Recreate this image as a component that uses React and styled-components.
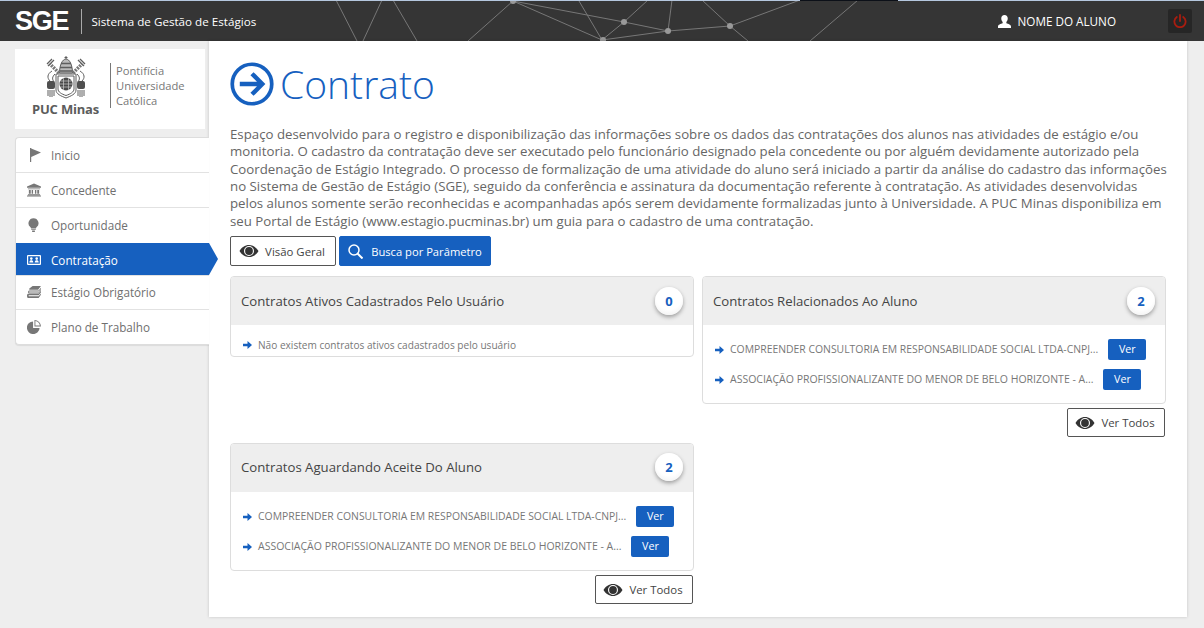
import React from 'react'
import styled, { createGlobalStyle } from 'styled-components'

const Global = createGlobalStyle`
  html, body { margin: 0; padding: 0; }
  body {
    background: #eeeeee;
    font-family: 'Open Sans', 'Noto Sans', sans-serif;
    color: #666;
    height: 628px;
    overflow: hidden;
  }
`

const blue = '#1660bf'

const Page = styled.div`
  width: 1204px;
  height: 628px;
  display: flex;
  flex-direction: column;
`

const Header = styled.header`
  position: relative;
  height: 41px;
  flex: none;
  box-sizing: border-box;
  background: #353535;
  border-top: 1px solid #b5c7de;
  border-image: linear-gradient(to right, #b5c7de 800px, #0c1018 800px, #0c1018 898px, #b5c7de 898px) 1;
  display: flex;
  align-items: center;
  overflow: hidden;
  color: #fff;
`

const Mesh = styled.svg`
  position: absolute;
  left: 0;
  top: -1px;
  width: 1204px;
  height: 41px;
`

const Brand = styled.div`
  font-family: 'Liberation Sans', sans-serif;
  font-weight: 700;
  font-size: 27px;
  letter-spacing: -1.2px;
  margin-left: 15px;
  padding-right: 13px;
  border-right: 1px solid #aaa;
  height: 25px;
  line-height: 25px;
  position: relative;
`

const HeaderTitle = styled.div`
  font-size: 11.65px;
  margin-left: 9px;
  position: relative;
`

const UserBox = styled.div`
  margin-left: auto;
  display: flex;
  align-items: center;
  position: relative;
  font-size: 11.7px;
  gap: 7px;
`

const PowerBox = styled.div`
  width: 24px;
  height: 24px;
  margin: 0 12px 0 52px;
  border-radius: 2px;
  background: #262626;
  display: flex;
  align-items: center;
  justify-content: center;
  position: relative;
`

const Body = styled.div`
  flex: 1;
  display: flex;
  align-items: flex-start;
`

const Sidebar = styled.aside`
  width: 194px;
  margin-left: 15px;
  padding-top: 8px;
  flex: none;
  position: relative;
  z-index: 1;
`

const LogoBox = styled.div`
  width: 190px;
  height: 80px;
  background: #fff;
  display: flex;
  align-items: flex-start;
  box-sizing: border-box;
  padding: 7px 0 0 17px;
`

const LogoMark = styled.div`
  width: 67px;
  display: flex;
  flex-direction: column;
  align-items: center;
  color: #5c5c5c;
`

const LogoName = styled.div`
  font-size: 13px;
  font-weight: 700;
  letter-spacing: -0.2px;
  line-height: 14px;
  white-space: nowrap;
  margin-top: 2px;
`

const LogoText = styled.div`
  margin: 7px 0 0 11px;
  padding-left: 5px;
  border-left: 1px solid #777;
  font-size: 11.2px;
  line-height: 15px;
  color: #777;
  height: 45px;
`

const Menu = styled.nav`
  margin-top: 8px;
  background: #fff;
  border: 1px solid #ddd;
  border-right: 0;
  border-radius: 4px 0 0 4px;
  box-shadow: 0 1px 1px rgba(0, 0, 0, 0.08);
`

const MenuItem = styled.div`
  position: relative;
  height: ${p => p.$h}px;
  display: flex;
  align-items: center;
  font-size: 11.7px;
  color: ${p => (p.$active ? '#fff' : '#6f6f6f')};
  background: ${p => (p.$active ? blue : 'transparent')};
  border-top: ${p => (p.$first || p.$active ? '0' : '1px solid #e2e2e2')};
  box-sizing: border-box;
  padding-top: ${p => p.$pt || 0}px;
  padding-bottom: ${p => p.$pb || 0}px;

  ${p => p.$active && `
    &::after {
      content: '';
      position: absolute;
      left: 100%;
      top: 0;
      border-left: 9px solid ${blue};
      border-top: 16px solid transparent;
      border-bottom: 16px solid transparent;
    }
  `}
`

const MenuIcon = styled.span`
  width: 35px;
  display: flex;
  justify-content: center;
  flex: none;
  color: ${p => (p.$active ? '#fff' : '#777')};
`

const Main = styled.main`
  width: 978px;
  height: 576px;
  background: #fff;
  box-sizing: border-box;
  padding: 0 21px;
  box-shadow: 0 0 3px rgba(0, 0, 0, 0.18);
  position: relative;
`

const TitleRow = styled.div`
  display: flex;
  align-items: center;
  height: 85px;
  gap: 6px;
`

const Title = styled.h1`
  margin: 0;
  font-size: 39px;
  font-weight: 300;
  color: ${blue};
  line-height: 46px;
`

const Intro = styled.p`
  margin: 0 -2px 0 0;
  font-size: 13.25px;
  line-height: 17.33px;
  color: #666;
  height: 110px;
`

const Toolbar = styled.div`
  display: flex;
  gap: 3px;
`

const Button = styled.div`
  display: inline-flex;
  align-items: center;
  justify-content: center;
  box-sizing: border-box;
  height: ${p => p.$h || 30}px;
  width: ${p => p.$w}px;
  gap: ${p => p.$gap || 6}px;
  border-radius: 2px;
  font-size: ${p => p.$size || 11.4}px;
  border: 1px solid ${p => (p.$primary ? blue : '#555')};
  background: ${p => (p.$primary ? blue : '#fff')};
  color: ${p => (p.$primary ? '#fff' : '#444')};
`

const Grid = styled.div`
  display: grid;
  grid-template-columns: 464px 464px;
  column-gap: 8px;
  row-gap: 6px;
  margin-top: 10px;
  align-items: start;
`

const Column = styled.div`
  display: flex;
  flex-direction: column;
`

const Panel = styled.section`
  border: 1px solid #ddd;
  border-radius: 4px;
  background: #fff;
  overflow: hidden;
  box-sizing: border-box;
`

const PanelHead = styled.div`
  height: 48px;
  box-sizing: border-box;
  padding: 0 10px ${p => (p.$lift ? 2 : 0)}px;
  background: #eeeeee;
  display: flex;
  align-items: center;
  justify-content: space-between;
  font-size: 13.2px;
  color: #444;
`

const Badge = styled.span`
  width: 28px;
  height: 28px;
  border-radius: 50%;
  background: radial-gradient(circle at 50% 35%, #fff 55%, #ececec 100%);
  color: ${blue};
  font-size: 13px;
  font-weight: 700;
  display: flex;
  align-items: center;
  justify-content: center;
  box-shadow: 0 2px 4px rgba(0, 0, 0, 0.35);
`

const PanelBody = styled.div`
  padding: ${p => (p.$empty ? '11px 12px 3px' : '14px 12px 13px')};
`

const Row = styled.div`
  display: flex;
  align-items: center;
  height: ${p => (p.$empty ? '17px' : '21px')};
  font-size: ${p => p.$size || 10.4}px;
  color: #777;
  white-space: nowrap;

  & + & { margin-top: 9px; }
`

const RowText = styled.span`
  margin-top: ${p => (p.$empty ? 0 : -2)}px;
`

const RowArrow = styled.svg`
  width: 9px;
  height: 8px;
  margin-right: 6px;
  flex: none;
`

const SeeButton = styled.span`
  margin-left: 10px;
  width: 38px;
  height: 21px;
  box-sizing: border-box;
  padding-bottom: 2px;
  border-radius: 2px;
  background: ${blue};
  color: #fff;
  font-size: 10.7px;
  display: flex;
  align-items: center;
  justify-content: center;
`

const FooterActions = styled.div`
  display: flex;
  justify-content: flex-end;
  margin: 4px 1px 0 0;
`

const EyeIcon = styled.svg`
  margin-left: -2px;
`

function Eye() {
  return (
    <EyeIcon width="20" height="12" viewBox="0 0 19 12" fill="#333">
      <path fillRule="evenodd" d="M9.500 0C5.500 0 2 2.500 0 6c2 3.500 5.500 6 9.500 6s7.500-2.500 9.500-6c-2-3.500-5.500-6-9.500-6Zm0 1a5 5 0 1 1 0 10 5 5 0 0 1 0-10Z" />
      <circle cx="9.500" cy="6" r="3.900" />
    </EyeIcon>
  )
}

function Arrow() {
  return (
    <RowArrow viewBox="0 0 9 8" fill={blue}>
      <path d="M0 2.700h4.500V0L9 4 4.500 8V5.300H0Z" />
    </RowArrow>
  )
}

function Crest() {
  return (
    <svg width="42" height="44" viewBox="0 0 42 44" fill="none" stroke="#5e5e5e" strokeWidth="1">
      <path d="M21 0v3M19.500 1.500h3" />
      <path d="M14.500 17c0-8 3-14 6.500-14s6.500 6 6.500 14Z" fill="#bbb" />
      <path d="M16 7.500h10M15 11.500h12M14.500 15h13" strokeWidth="1.300" />
      <path d="M14 17 5 8M28 17l9-9" stroke="#777" strokeWidth="3.500" strokeDasharray="2 1" />
      <path d="M9 4 3 10M33 4l6 6M7 3 2 8M35 3l5 5" strokeWidth="1.300" />
      <path d="M11 18h20v16c0 4-5 6-10 8-5-2-10-4-10-8Z" fill="#fff" />
      <path d="M13 20h16v13c0 3-3.500 5-8 6.500-4.500-1.500-8-3.500-8-6.500Z" />
      <circle cx="21" cy="28" r="6.500" fill="#4a4a4a" stroke="none" />
      <path d="M15.500 25h11M15 28h12M15.500 31h11M18.500 22v12M23.500 22v12" stroke="#ccc" strokeWidth=".7" />
      <path d="M7 15c-5 3-5 7-2 10M35 15c5 3 5 7 2 10M10 18c-3 3-3 5-1 8M32 18c3 3 3 5 1 8" />
      <rect x="2" y="25" width="8" height="8" rx="2" fill="#4f4f4f" stroke="none" />
      <rect x="32" y="25" width="8" height="8" rx="2" fill="#4f4f4f" stroke="none" />
      <path d="M3 34v6M5 34v7M7 34v7M9 34v6M33 34v6M35 34v7M37 34v7M39 34v6" strokeWidth="1" />
    </svg>
  )
}

const FlagIcon = styled.svg`
  margin-left: 3px;
`

function Flag() {
  return (
    <FlagIcon width="11" height="14" viewBox="0 0 11 14" fill="currentColor">
      <path d="M0 0h1.200v14H0ZM1.200.5 11 4.500 1.200 9Z" />
    </FlagIcon>
  )
}

function Bank() {
  return (
    <svg width="14" height="14" viewBox="0 0 15 14" fill="currentColor">
      <path d="M7.500 0 15 3.200V4.500H0V3.200ZM1 5.500h13v.8H1ZM2 7h2v4H2ZM5 7h1.500v4H5ZM8.500 7H10v4H8.500ZM11 7h2v4h-2ZM1 11.500h13v1H1ZM0 13h15v1H0Z" />
    </svg>
  )
}

function Bulb() {
  return (
    <svg width="11" height="14" viewBox="0 0 12 15" fill="currentColor">
      <path d="M6 0a5.500 5.500 0 0 1 3.500 9.700c-.6.600-.8 1-.8 1.500H3.300c0-.5-.2-.9-.8-1.500A5.500 5.500 0 0 1 6 0ZM3.500 12h5v1h-5ZM4.500 13.500h3V15h-3Z" />
    </svg>
  )
}

function Card() {
  return (
    <svg width="14" height="10" viewBox="0 0 14 10" fill="currentColor">
      <path fillRule="evenodd" d="M1 0h12a1 1 0 0 1 1 1v8a1 1 0 0 1-1 1H1a1 1 0 0 1-1-1V1a1 1 0 0 1 1-1Zm.2 1.200v7.600h11.600V1.200Z" />
      <circle cx="4.300" cy="3.600" r="1.300" />
      <circle cx="9.700" cy="3.600" r="1.300" />
      <path d="M2.300 7.500c0-1.700 1-2.300 2-2.300s2 .6 2 2.300ZM7.700 7.500c0-1.700 1-2.300 2-2.300s2 .6 2 2.300Z" />
    </svg>
  )
}

function Books() {
  return (
    <svg width="14" height="12" viewBox="0 0 15 13" fill="currentColor">
      <path d="M6 0h9l-3 4H3c-1 0-1-.8-.5-1.300Z" />
      <path d="M2 5h10.500L15 2v1.500L12.500 6H2.500C2 6 2 7 2.500 7h10L15 4v1.500L12.500 8H2C1 8 .5 6 2 5Z" />
      <path d="M1 8.500h11.500L15 5.500V7l-2.500 3H2c-.5 0-.5 1 0 1h10.500L15 8v1.500L12.500 13H1.500C-.5 13-.5 9 1 8.500Z" />
    </svg>
  )
}

function Pie() {
  return (
    <svg width="14" height="14" viewBox="0 0 15 15" fill="currentColor">
      <path d="M6.500 1.500v7h7a6.800 6.800 0 1 1-7-7Z" />
      <path fillRule="evenodd" d="M8 0a7 7 0 0 1 7 7H8Zm1 1.200V6h4.800A6 6 0 0 0 9 1.200Z" />
    </svg>
  )
}

const navItems = [
  { label: 'Inicio', icon: <Flag />, h: 34, first: true },
  { label: 'Concedente', icon: <Bank />, h: 35 },
  { label: 'Oportunidade', icon: <Bulb />, h: 36, pb: 2 },
  { label: 'Contratação', icon: <Card />, h: 32, active: true, pt: 2 },
  { label: 'Estágio Obrigatório', icon: <Books />, h: 34, pb: 2 },
  { label: 'Plano de Trabalho', icon: <Pie />, h: 35 },
]

const related = [
  { text: 'COMPREENDER CONSULTORIA EM RESPONSABILIDADE SOCIAL LTDA-CNPJ...', size: 10.4 },
  { text: 'ASSOCIAÇÃO PROFISSIONALIZANTE DO MENOR DE BELO HORIZONTE - A...', size: 10.5 },
]

function ContractPanel({ title, lift }) {
  return (
    <>
      <Panel>
        <PanelHead $lift={lift}>
          {title}
          <Badge>2</Badge>
        </PanelHead>
        <PanelBody>
          {related.map(r => (
            <Row key={r.text} $size={r.size}>
              <Arrow />
              <RowText>{r.text}</RowText>
              <SeeButton>Ver</SeeButton>
            </Row>
          ))}
        </PanelBody>
      </Panel>
      <FooterActions>
        <Button $w={98} $h={29}><Eye /> Ver Todos</Button>
      </FooterActions>
    </>
  )
}

export default function App() {
  return (
    <Page>
      <Global />
      <Header>
        <Mesh viewBox="0 0 1204 41" fill="none" stroke="#777" strokeWidth="1">
          <path d="M336 0l21 41M382 0l-19 41M393 0l24 41M468 41 513 1 602 40M513 1 624 22 668 31M579 1l23 39M602 40l22-18L648 0M602 40l66-9 62-5L800 0M672 0l-4 31M702 0l28 26 18 15M858 0l-48 41" />
          <g fill="#999" stroke="none">
            <circle cx="513" cy="1" r="3" />
            <circle cx="624" cy="22" r="3" />
            <circle cx="668" cy="31" r="3" />
            <circle cx="730" cy="26" r="3" />
            <circle cx="603" cy="40" r="3" />
          </g>
        </Mesh>
        <Brand>SGE</Brand>
        <HeaderTitle>Sistema de Gestão de Estágios</HeaderTitle>
        <UserBox>
          <svg width="13" height="13" viewBox="0 0 14 14" fill="#fff">
            <path d="M7 0c2.200 0 3.500 1.500 3.500 3.800 0 1.500-.7 3-1.500 3.800v1.200c2 .7 5 1.500 5 3.500V14H0v-1.700c0-2 3-2.800 5-3.500V7.600C4.200 6.800 3.500 5.300 3.500 3.800 3.500 1.500 4.800 0 7 0Z" />
          </svg>
          NOME DO ALUNO
        </UserBox>
        <PowerBox>
          <svg width="14" height="14" viewBox="0 0 14 14" fill="none" stroke="#a81d10" strokeWidth="1.800" strokeLinecap="round">
            <path d="M7 1v6M3.800 3A5.600 5.600 0 1 0 10.200 3" />
          </svg>
        </PowerBox>
      </Header>
      <Body>
        <Sidebar>
          <LogoBox>
            <LogoMark>
              <Crest />
              <LogoName>PUC Minas</LogoName>
            </LogoMark>
            <LogoText>Pontifícia<br />Universidade<br />Católica</LogoText>
          </LogoBox>
          <Menu>
            {navItems.map(item => (
              <MenuItem key={item.label} $h={item.h} $first={item.first} $active={item.active} $pt={item.pt} $pb={item.pb}>
                <MenuIcon $active={item.active}>{item.icon}</MenuIcon>
                {item.label}
              </MenuItem>
            ))}
          </Menu>
        </Sidebar>
        <Main>
          <TitleRow>
            <svg width="44" height="44" viewBox="0 0 45 45" fill="none" stroke={blue}>
              <circle cx="22.500" cy="22.500" r="20.200" strokeWidth="3.800" />
              <path d="M10 22.500h22M22.500 12l10.500 10.500L22.500 33" strokeWidth="4.500" />
            </svg>
            <Title>Contrato</Title>
          </TitleRow>
          <Intro>
            Espaço desenvolvido para o registro e disponibilização das informações sobre os dados das contratações dos alunos nas atividades de estágio e/ou monitoria. O cadastro da contratação deve ser executado pelo funcionário designado pela concedente ou por alguém devidamente autorizado pela Coordenação de Estágio Integrado. O processo de formalização de uma atividade do aluno será iniciado a partir da análise do cadastro das informações no Sistema de Gestão de Estágio (SGE), seguido da conferência e assinatura da documentação referente à contratação. As atividades desenvolvidas pelos alunos somente serão reconhecidas e acompanhadas após serem devidamente formalizadas junto à Universidade. A PUC Minas disponibiliza em seu Portal de Estágio (www.estagio.pucminas.br) um guia para o cadastro de uma contratação.
          </Intro>
          <Toolbar>
            <Button $w={106}><Eye /> Visão Geral</Button>
            <Button $w={152} $primary $size={11.2} $gap={8}>
              <svg width="15" height="15" viewBox="0 0 15 15" fill="none" stroke="#fff" strokeWidth="1.500">
                <circle cx="6" cy="6" r="5" />
                <path d="m9.500 9.500 5 5" strokeWidth="2" />
              </svg>
              Busca por Parâmetro
            </Button>
          </Toolbar>
          <Grid>
            <Column>
              <Panel>
                <PanelHead>
                  Contratos Ativos Cadastrados Pelo Usuário
                  <Badge>0</Badge>
                </PanelHead>
                <PanelBody $empty>
                  <Row $empty $size={10.1}><Arrow /><RowText $empty>Não existem contratos ativos cadastrados pelo usuário</RowText></Row>
                </PanelBody>
              </Panel>
            </Column>
            <Column>
              <ContractPanel title="Contratos Relacionados Ao Aluno" />
            </Column>
            <Column>
              <ContractPanel title="Contratos Aguardando Aceite Do Aluno" lift />
            </Column>
          </Grid>
        </Main>
      </Body>
    </Page>
  )
}
